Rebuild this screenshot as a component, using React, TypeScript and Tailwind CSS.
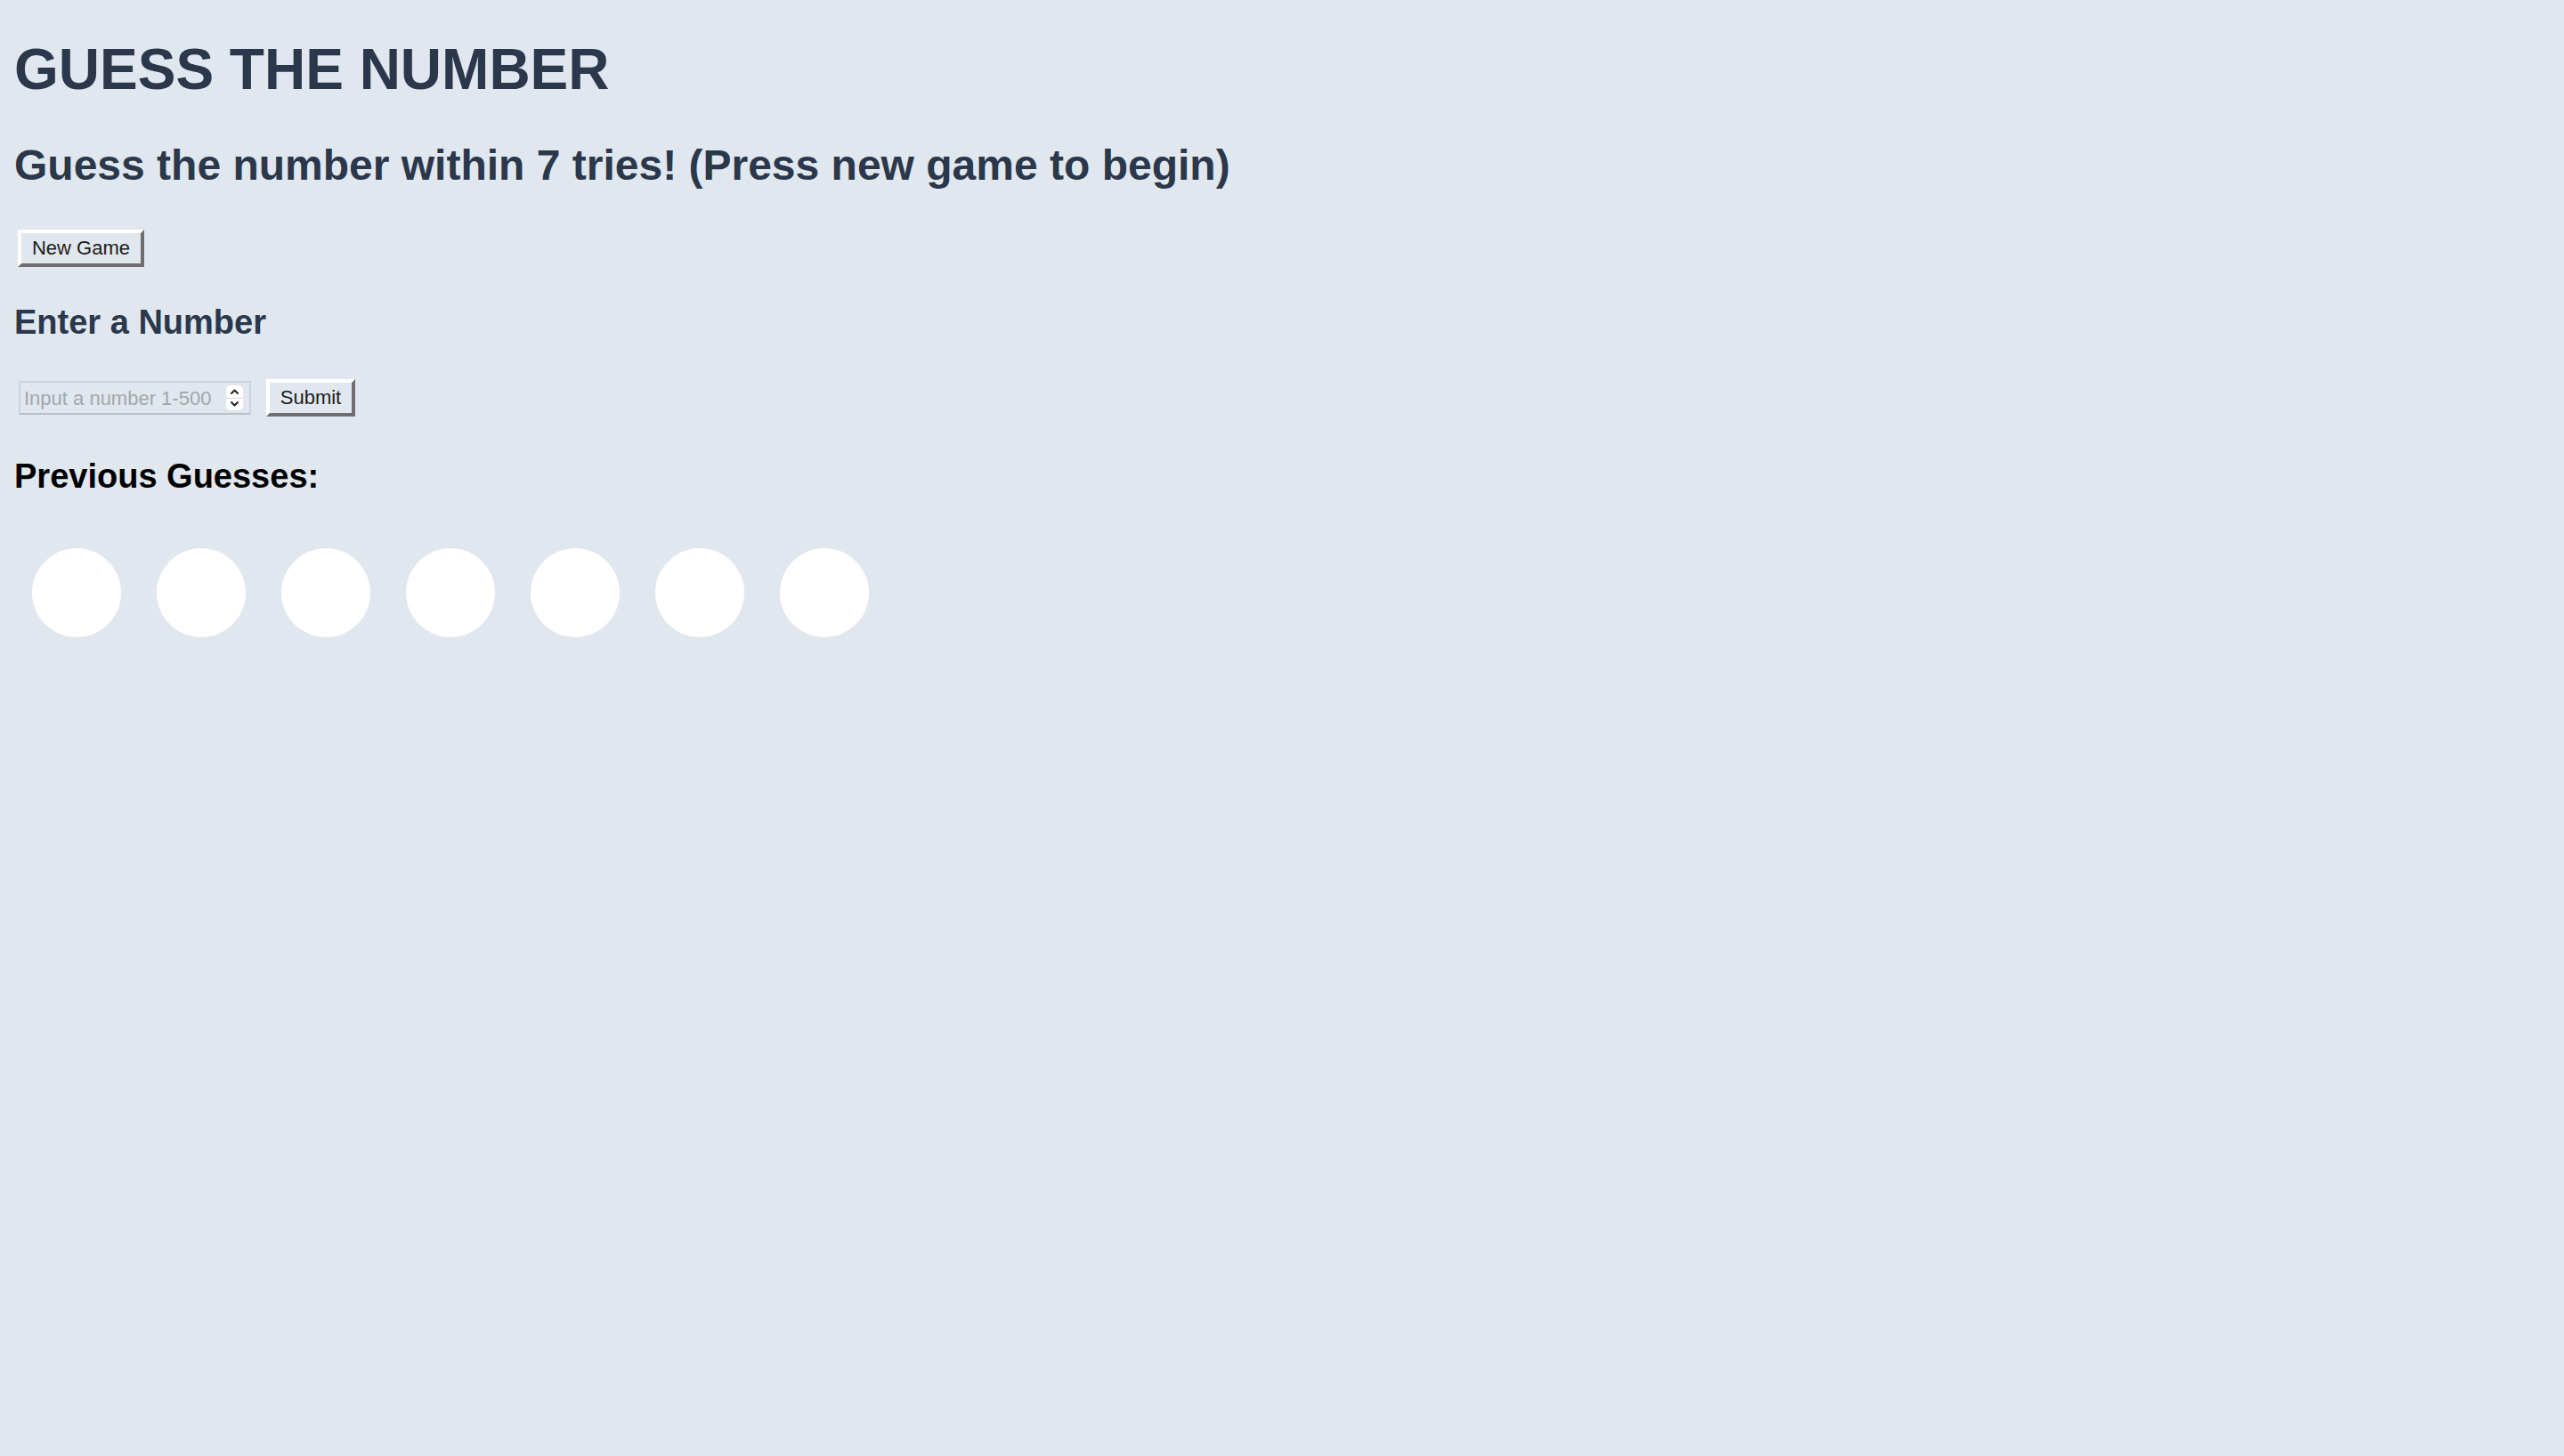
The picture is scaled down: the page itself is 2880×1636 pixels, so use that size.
import { useState } from "react";

const font = { fontFamily: '"Liberation Sans", Arial, sans-serif' };

const Spinner = () => (
  <div className="flex h-[28px] w-[19px] flex-col items-center justify-between rounded-[5px] bg-white py-[3px]">
    <svg width="11" height="8" viewBox="0 0 11 8" fill="none">
      <path d="M2 6 L5.5 2.5 L9 6" stroke="#222" strokeWidth="2" strokeLinecap="round" strokeLinejoin="round" />
    </svg>
    <div className="h-px w-full bg-[#d4d8dd]" />
    <svg width="11" height="8" viewBox="0 0 11 8" fill="none">
      <path d="M2 2 L5.5 5.5 L9 2" stroke="#222" strokeWidth="2" strokeLinecap="round" strokeLinejoin="round" />
    </svg>
  </div>
);

const OldButton = ({ label, width }: { label: string; width: string }) => (
  <button
    className={`${width} h-[42px] border-4 border-t-white border-l-white border-r-[#6e6e6e] border-b-[#6e6e6e] bg-transparent text-[22px] leading-none text-[#1c1c1c]`}
    style={font}
  >
    {label}
  </button>
);

export default function App() {
  const [guess, setGuess] = useState("");
  const guesses = Array.from({ length: 7 });

  return (
    <div className="min-h-screen bg-[#e0e7ee] px-4 pt-[41px]" style={font}>
      <h1 className="text-[64px] leading-[74px] font-bold text-[#2b374b]">GUESS THE NUMBER</h1>
      <h2 className="mt-[43px] text-[48px] leading-[55px] font-bold text-[#2b374b]">
        Guess the number within 7 tries! (Press new game to begin)
      </h2>

      <div className="mt-[45px] flex pl-1">
        <OldButton label="New Game" width="w-[142px]" />
      </div>

      <h3 className="mt-[41px] text-[38px] leading-[43px] font-bold text-[#2b374b]">Enter a Number</h3>

      <div className="mt-[42px] flex items-start pl-[5px]">
        <div className="mt-[2px] flex h-[38px] w-[261px] items-center border-2 border-[#cdd3da] border-b-[#b9bfc7] pr-[7px]">
          <input
            value={guess}
            onChange={(e) => setGuess(e.target.value)}
            placeholder="Input a number 1-500"
            className="min-w-0 flex-1 bg-transparent pl-[4px] text-[22px] text-[#222] outline-none placeholder:text-[#a3a7ac]"
            style={font}
          />
          <Spinner />
        </div>
        <div className="ml-[17px]">
          <OldButton label="Submit" width="w-[100px]" />
        </div>
      </div>

      <h3 className="mt-[46px] text-[38px] leading-[43px] font-bold text-black">Previous Guesses:</h3>

      <div className="mt-[59px] flex gap-10 pl-5">
        {guesses.map((_, i) => (
          <div key={i} className="h-[100px] w-[100px] rounded-full bg-white" />
        ))}
      </div>
    </div>
  );
}
